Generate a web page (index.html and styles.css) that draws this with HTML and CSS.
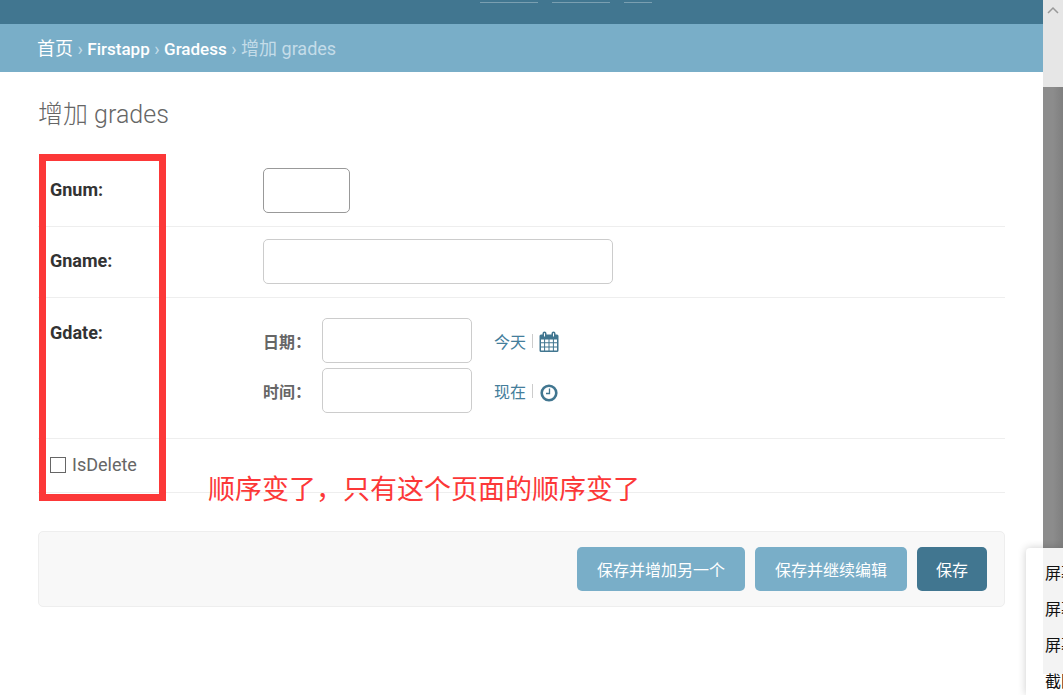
FILE: index.html
```html
<!DOCTYPE html>
<html lang="zh-CN">
<head>
<meta charset="utf-8">
<title>增加 grades</title>
<link rel="stylesheet" href="styles.css">
</head>
<body>
<div class="window">
  <div class="page">
    <header class="topbar">
      <nav class="user-links" aria-label="user tools">
        <span class="user-link"></span><span class="user-link"></span><span class="user-link user-link-short"></span>
      </nav>
    </header>
    <nav class="breadcrumbs">
      <a href="#">首页</a> › <a class="latin" href="#">Firstapp</a> › <a class="latin" href="#">Gradess</a> › 增加 grades
    </nav>
    <main class="content">
      <h1>增加 grades</h1>
      <form>
        <div class="fields">
          <div class="row">
            <label class="name" for="gnum">Gnum:</label>
            <input class="box box-number" id="gnum" type="text">
          </div>
          <div class="row">
            <label class="name" for="gname">Gname:</label>
            <input class="box box-wide" id="gname" type="text">
          </div>
          <div class="row row-date">
            <span class="name">Gdate:</span>
            <div class="datetime">
              <div class="line">
                <label class="part" for="date">日期：</label>
                <input class="box box-date" id="date" type="text">
                <span class="shortcuts"><a href="#">今天</a><i class="bar"></i><a class="icon" href="#" aria-label="calendar"><svg width="20" height="24" viewBox="0 0 20 24"><path transform="translate(0 2)" fill="#417690" fill-rule="evenodd" d="M2 3.500h1.500V2.500a2 2 0 0 1 4 0v1h5v-1a2 2 0 0 1 4 0v1H18q1.500 0 1.500 1.500v14.500q0 1.500-1.500 1.500H2q-1.500 0-1.500-1.500V5q0-1.500 1.500-1.500zM2 8.500v2.700h3.100V8.500zm4.100 0v2.700h3.400V8.500zm4.400 0v2.700h3.400V8.500zm4.400 0v2.700H18V8.500zM2 12.200v3.200h3.100v-3.200zm4.100 0v3.200h3.400v-3.200zm4.400 0v3.200h3.400v-3.200zm4.400 0v3.200H18v-3.200zM2 16.400v3.100h3.100v-3.100zm4.100 0v3.100h3.400v-3.100zm4.400 0v3.100h3.400v-3.100zm4.400 0v3.100H18v-3.100zM5 2.500v3h1v-3a.5.5 0 0 0-1 0zm9 0v3h1v-3a.5.5 0 0 0-1 0z"/></svg></a></span>
              </div>
              <div class="line">
                <label class="part" for="time">时间：</label>
                <input class="box box-date" id="time" type="text">
                <span class="shortcuts"><a href="#">现在</a><i class="bar"></i><a class="icon" href="#" aria-label="clock"><svg width="20" height="24" viewBox="0 0 20 24"><circle cx="10" cy="14" r="7.300" fill="none" stroke="#417690" stroke-width="2.600"/><path d="M10.500 9.500v5H7" fill="none" stroke="#417690" stroke-width="1.300"/></svg></a></span>
              </div>
            </div>
          </div>
          <div class="row row-check">
            <input class="tick" id="isdelete" type="checkbox">
            <label for="isdelete">IsDelete</label>
          </div>
          <div class="mark"></div>
          <p class="note">顺序变了，只有这个页面的顺序变了</p>
        </div>
        <div class="submit-row">
          <button type="button" class="button">保存并增加另一个</button>
          <button type="button" class="button">保存并继续编辑</button>
          <button type="button" class="button button-main">保存</button>
        </div>
      </form>
    </main>
  </div>
  <div class="scrollbar">
    <svg class="arrow" width="12" height="8" viewBox="0 0 12 8"><path d="M1 7l5-5 5 5" fill="none" stroke="#999" stroke-width="1.500"/></svg>
    <div class="thumb"></div>
  </div>
  <div class="menu">
    <div class="menu-item">屏幕</div>
    <div class="menu-item">屏幕</div>
    <div class="menu-item">屏幕</div>
    <div class="menu-item">截图</div>
  </div>
</div>
</body>
</html>
```
FILE: styles.css
```css
* { box-sizing: border-box; }
body {
  margin: 0;
  background: #fff;
  color: #666;
  font-family: Roboto, "Noto Sans CJK SC", sans-serif;
  font-size: 16px;
}
a { text-decoration: none; }
.window { position: relative; display: flex; min-height: 100vh; overflow: hidden; }
.page { flex: 1; min-width: 0; }

.topbar { height: 24px; background: #417690; }
.user-links { display: flex; justify-content: flex-end; gap: 14px; padding: 2px 391px 0 0; }
.user-link { width: 58px; height: 1px; background: #7a9fb1; }
.user-link-short { width: 28px; }
.breadcrumbs {
  padding: 1px 38px 0 37px;
  background: #79aec8;
  color: #c4dce8;
  font-size: 18px;
  line-height: 47px;
  height: 48px;
}
.breadcrumbs a { color: #fff; }
.breadcrumbs .latin { font-size: 17px; font-weight: 500; }

.content { padding: 26px 38px; }
h1 { margin: 0 0 24px; font-size: 25px; font-weight: 300; line-height: 34px; }

.fields { position: relative; }
.row { display: flex; padding: 12px 12px 13px; border-bottom: 1px solid #eee; }
.name { flex: 0 0 213px; color: #333; font-size: 18px; font-weight: 700; line-height: 20px; padding-top: 12px; }
.box {
  height: 45px;
  padding: 6px 8px;
  border: 1px solid #ccc;
  border-radius: 5px;
  background: #fff;
  font: inherit;
}
.box-number { width: 87px; border-color: #999; }
.box-wide { width: 350px; }
.box-date { width: 150px; }
.row-date { padding-top: 20px; padding-bottom: 25px; }
.row-date .name { padding-top: 5px; }
.datetime { display: flex; flex-direction: column; gap: 5px; }
.line { display: flex; align-items: center; }
.part { width: 59px; font-weight: 700; }
.shortcuts { display: flex; align-items: center; margin-left: 22px; color: #417690; }
.shortcuts a { color: #447e9b; }
.bar { width: 1px; height: 14px; margin: 0 6px; background: #ccc; }
.icon { display: flex; }
.row-check { align-items: center; gap: 6px; padding: 14px 12px 15px; font-size: 18px; line-height: 24px; }
.tick {
  appearance: none;
  width: 16px;
  height: 16px;
  margin: 0;
  border: 1px solid #666;
  background: #fff;
}
.mark { position: absolute; top: -2px; left: 1px; width: 127px; height: 347px; border: 7px solid #fc3838; }
.note {
  position: absolute;
  left: 170px;
  bottom: -17px;
  margin: 0;
  color: #fc3838;
  font-size: 27px;
  line-height: 40px;
  white-space: nowrap;
}

.submit-row {
  display: flex;
  justify-content: flex-end;
  gap: 10px;
  margin-top: 38px;
  padding: 15px 17px;
  border: 1px solid #eee;
  border-radius: 5px;
  background: #f8f8f8;
}
.button {
  height: 44px;
  padding: 0 20px;
  border: 0;
  border-radius: 5px;
  background: #79aec8;
  color: #fff;
  font: inherit;
}
.button-main { padding: 0 19px; background: #417690; }

.scrollbar { display: flex; flex-direction: column; width: 20px; background: #e6e6e6; }
.arrow { flex: none; margin: 6px 4px 73px; }
.thumb { flex: 1; background: linear-gradient(90deg, #8c8c8c 50%, #7f7f7f); }

.menu {
  position: absolute;
  top: 548px;
  right: 0;
  bottom: 0;
  width: 37px;
  padding: 8px 0 0 19px;
  overflow: hidden;
  border-top-left-radius: 4px;
  background: linear-gradient(#f3f3f3, #f3f3f3) 17px 0 / 20px 126px no-repeat #fff;
  box-shadow: 0 0 8px rgba(0, 0, 0, 0.2);
  color: #111;
  line-height: 36px;
  white-space: nowrap;
}
```
